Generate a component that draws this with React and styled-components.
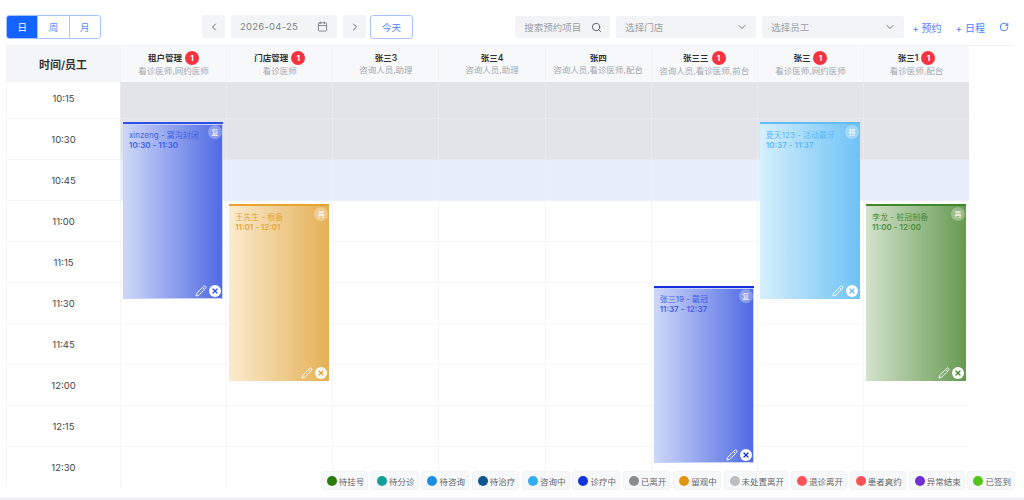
import React from "react";
import styled, { createGlobalStyle } from "styled-components";
import {
  Calendar,
  ChevronDown,
  ChevronLeft,
  ChevronRight,
  Pencil,
  RotateCw,
  Search,
  X,
} from "lucide-react";

// data
const STAFF = [
  { name: "租户管理", role: "看诊医师,网约医师", count: 1 },
  { name: "门店管理", role: "看诊医师", count: 1 },
  { name: "张三3", role: "咨询人员,助理" },
  { name: "张三4", role: "咨询人员,助理" },
  { name: "张四", role: "咨询人员,看诊医师,配台" },
  { name: "张三三", role: "咨询人员,看诊医师,前台", count: 1 },
  { name: "张三", role: "看诊医师,网约医师", count: 1 },
  { name: "张三1", role: "看诊医师,配台", count: 1 },
];

const TIMES = ["10:15", "10:30", "10:45", "11:00", "11:15", "11:30", "11:45", "12:00", "12:15", "12:30"];

const EVENTS = {
  0: { top: 44, title: "xinzeng - 窝沟封闭", time: "10:30 - 11:30", tag: "复", from: "#cfd8f8", to: "#4e69e4", line: "#2f50e6", text: "#3f5fe6", edge: "#c9d3f9" },
  1: { top: 126, title: "王先生 - 根备", time: "11:01 - 12:01", tag: "再", from: "#faebcf", to: "#e5b055", line: "#e8a32e", text: "#e6a63c" },
  5: { top: 208, title: "张三19 - 戴冠", time: "11:37 - 12:37", tag: "复", from: "#cfd8f8", to: "#4e69e4", line: "#1230e0", text: "#3f5fe6", edge: "#c9d3f9" },
  6: { top: 44, title: "夏天123 - 活动戴牙", time: "10:37 - 11:37", tag: "预", from: "#d6effc", to: "#6dc2f6", line: "#62bdf5", text: "#5cb8f2" },
  7: { top: 126, title: "李龙 - 桩冠制备", time: "11:00 - 12:00", tag: "再", from: "#d3e2cc", to: "#659a50", line: "#3f8a28", text: "#4d8c38" },
};

const LEGEND = [
  ["待挂号", "#2a7a0c"],
  ["待分诊", "#13a098"],
  ["待咨询", "#1c8fe3"],
  ["待治疗", "#0f5590"],
  ["咨询中", "#30aef2"],
  ["诊疗中", "#1232dc"],
  ["已离开", "#8c8c8c"],
  ["留观中", "#e0950e"],
  ["未处置离开", "#bdbdbd"],
  ["退诊离开", "#ff5257"],
  ["患者爽约", "#ff5257"],
  ["异常结束", "#722ed1"],
  ["已签到", "#52c41a"],
];

const SLOT_TONES = {
  closed: { bg: "#e3e4e9", line: "#e9eaee" },
  now: { bg: "#e8edfc", line: "#ecf0fc" },
  open: { bg: "#ffffff", line: "#f6f6f8" },
};

const rowTone = (index) => (index < 2 ? SLOT_TONES.closed : index === 2 ? SLOT_TONES.now : SLOT_TONES.open);

// main
const App = () => {
  return (
    <Page>
      <GlobalStyle />
      <Toolbar>
        <Segmented>
          <SegmentButton $active>日</SegmentButton>
          <SegmentButton>周</SegmentButton>
          <SegmentButton>月</SegmentButton>
        </Segmented>
        <DateGroup>
          <SquareButton>
            <ChevronLeft size={12} />
          </SquareButton>
          <DateField>
            2026-04-25
            <Calendar size={11} />
          </DateField>
          <SquareButton>
            <ChevronRight size={12} />
          </SquareButton>
          <TodayButton>今天</TodayButton>
        </DateGroup>
        <FilterGroup>
          <FilterField $width={95}>
            搜索预约项目
            <Search size={11} color="#555b66" />
          </FilterField>
          <FilterField $width={140}>
            选择门店
            <ChevronDown size={12} />
          </FilterField>
          <FilterField $width={142}>
            选择员工
            <ChevronDown size={12} />
          </FilterField>
          <TextAction $gap={2}>+ 预约</TextAction>
          <TextAction $gap={8}>+ 日程</TextAction>
          <RefreshAction>
            <RotateCw size={10} strokeWidth={2.4} />
          </RefreshAction>
        </FilterGroup>
      </Toolbar>

      <Board>
        <HeaderRow>
          <CornerCell>时间/员工</CornerCell>
          {STAFF.map((staff) => (
            <StaffCell key={staff.name}>
              <StaffName>
                {staff.name}
                {staff.count && <CountBadge>{staff.count}</CountBadge>}
              </StaffName>
              <StaffRole>{staff.role}</StaffRole>
            </StaffCell>
          ))}
        </HeaderRow>
        <BodyViewport>
          <BodyGrid>
            <TimeColumn>
              {TIMES.map((time) => (
                <TimeCell key={time}>{time}</TimeCell>
              ))}
            </TimeColumn>
            {STAFF.map((staff, col) => {
              const event = EVENTS[col];
              return (
                <StaffColumn key={staff.name}>
                  {TIMES.map((time, index) => (
                    <SlotCell key={time} $tone={rowTone(index)} />
                  ))}
                  {event && (
                    <EventCard
                      $from={event.from}
                      $to={event.to}
                      $line={event.line}
                      $edge={event.edge}
                      style={{ top: event.top }}
                    >
                      <EventText $color={event.text}>{event.title}</EventText>
                      <EventTime $color={event.text}>{event.time}</EventTime>
                      <EventTag>{event.tag}</EventTag>
                      <EventActions>
                        <Pencil size={12} color="#ffffff" strokeWidth={2} />
                        <CloseDot $color={event.line}>
                          <X size={8} strokeWidth={3.6} />
                        </CloseDot>
                      </EventActions>
                    </EventCard>
                  )}
                </StaffColumn>
              );
            })}
          </BodyGrid>
        </BodyViewport>
      </Board>

      <Legend>
        {LEGEND.map(([label, color]) => (
          <LegendChip key={label}>
            <LegendDot $color={color} />
            {label}
          </LegendChip>
        ))}
      </Legend>
      <BottomBand />
    </Page>
  );
};

// styled
const GlobalStyle = createGlobalStyle`
  html, body {
    margin: 0;
    background: #fff;
    overflow: hidden;
  }
  * {
    box-sizing: border-box;
  }
`;

const Page = styled.div`
  position: relative;
  width: 1024px;
  height: 500px;
  padding: 0 10px 0 6px;
  overflow: hidden;
  font-family: "Inter", "Noto Sans CJK SC", sans-serif;
  color: #333;
`;

const Toolbar = styled.div`
  display: flex;
  align-items: flex-start;
  height: 46px;
  padding-top: 15px;
  border-bottom: 1px solid #f1f2f4;
`;

const Segmented = styled.div`
  display: flex;
  width: 95px;
  height: 24px;
  border: 1px solid #aac4ff;
  border-radius: 3px;
  overflow: hidden;
`;

const SegmentButton = styled.div`
  flex: 1;
  display: flex;
  align-items: center;
  justify-content: center;
  font-size: 9.5px;
  color: ${(p) => (p.$active ? "#fff" : "#5b8cff")};
  background: ${(p) => (p.$active ? "#1463ff" : "#fff")};
  & + & {
    border-left: 1px solid #aac4ff;
  }
`;

const DateGroup = styled.div`
  display: flex;
  margin-left: 101px;
  gap: 6px;
`;

const SquareButton = styled.div`
  display: flex;
  align-items: center;
  justify-content: center;
  width: 23px;
  height: 23px;
  border-radius: 2px;
  background: #f3f4f6;
  color: #666c75;
`;

const DateField = styled.div`
  display: flex;
  align-items: center;
  justify-content: space-between;
  width: 106px;
  height: 23px;
  padding: 0 9px;
  border-radius: 2px;
  background: #f3f4f6;
  color: #7d828a;
  font-size: 9.5px;
  letter-spacing: 0.25px;
`;

const TodayButton = styled.div`
  display: flex;
  align-items: center;
  justify-content: center;
  width: 43px;
  height: 24px;
  margin-left: -2px;
  border: 1px solid #aac4ff;
  border-radius: 3px;
  color: #4f84ff;
  font-size: 9.5px;
`;

const FilterGroup = styled.div`
  display: flex;
  align-items: center;
  height: 22px;
  margin-top: 1px;
  margin-left: auto;
  gap: 6px;
`;

const FilterField = styled.div`
  display: flex;
  align-items: center;
  justify-content: space-between;
  width: ${(p) => p.$width}px;
  height: 22px;
  padding: 0 8px 0 9px;
  border-radius: 2px;
  background: #f3f4f6;
  color: #9a9ea6;
  font-size: 9.5px;
  & svg {
    color: #70757d;
  }
`;

const TextAction = styled.div`
  margin-left: ${(p) => p.$gap}px;
  color: #4f7dff;
  font-size: 10px;
  white-space: nowrap;
`;

const RefreshAction = styled.div`
  display: flex;
  margin: 0 5px 0 8px;
  color: #4f7dff;
`;

const Board = styled.div`
  width: 964px;
`;

const HeaderRow = styled.div`
  display: grid;
  grid-template-columns: 114px repeat(8, 106.15px);
  height: 36px;
`;

const CornerCell = styled.div`
  display: flex;
  align-items: center;
  justify-content: center;
  background: #f4f5f7;
  color: #333;
  font-size: 11px;
  font-weight: 600;
`;

const StaffCell = styled.div`
  display: flex;
  flex-direction: column;
  align-items: center;
  justify-content: center;
  background: #f7f8fa;
  border-left: 1px solid #f2f3f5;
`;

const StaffName = styled.div`
  display: flex;
  align-items: center;
  gap: 3px;
  min-height: 12px;
  color: #333;
  font-size: 8.5px;
  font-weight: 600;
  line-height: 12px;
`;

const CountBadge = styled.span`
  display: flex;
  align-items: center;
  justify-content: center;
  width: 14px;
  height: 14px;
  border-radius: 50%;
  background: #f5333f;
  color: #fff;
  font-size: 8px;
  font-weight: 700;
`;

const StaffRole = styled.div`
  color: #a3a7ae;
  font-size: 8.5px;
  line-height: 12px;
  white-space: nowrap;
`;

const BodyViewport = styled.div`
  height: 405px;
  overflow: hidden;
`;

const BodyGrid = styled.div`
  display: grid;
  grid-template-columns: 114px repeat(8, 106.15px);
  margin-top: -4px;
`;

const TimeColumn = styled.div`
  display: flex;
  flex-direction: column;
  border-left: 1px solid #f5f6f8;
`;

const TimeCell = styled.div`
  display: flex;
  align-items: center;
  justify-content: center;
  height: 41px;
  border-bottom: 1px solid #f6f6f8;
  color: #444;
  font-size: 9.5px;
`;

const StaffColumn = styled.div`
  position: relative;
  display: flex;
  flex-direction: column;
`;

const SlotCell = styled.div`
  height: 41px;
  background: ${(p) => p.$tone.bg};
  border-left: 1px solid ${(p) => p.$tone.line};
  border-bottom: 1px solid ${(p) => p.$tone.line};
`;

const EventCard = styled.div`
  position: absolute;
  left: 3px;
  width: 100px;
  height: 177px;
  padding: 6px 6px 0;
  background: linear-gradient(90deg, ${(p) => p.$from}, ${(p) => p.$to});
  border-top: 2px solid ${(p) => p.$line};
  box-shadow: ${(p) => (p.$edge ? `inset 0 0 0 1px ${p.$edge}` : "none")};
`;

const EventText = styled.div`
  color: ${(p) => p.$color};
  font-size: 8px;
  line-height: 10px;
  white-space: nowrap;
`;

const EventTime = styled(EventText)`
  font-weight: 600;
`;

const EventTag = styled.span`
  position: absolute;
  top: 1px;
  right: 1px;
  display: flex;
  align-items: center;
  justify-content: center;
  width: 14px;
  height: 14px;
  border-radius: 50%;
  background: rgba(255, 255, 255, 0.3);
  color: #fff;
  font-size: 7px;
`;

const EventActions = styled.div`
  position: absolute;
  right: 2px;
  bottom: 2px;
  display: flex;
  align-items: center;
  gap: 2px;
`;

const CloseDot = styled.span`
  display: flex;
  align-items: center;
  justify-content: center;
  width: 12px;
  height: 12px;
  border-radius: 50%;
  background: #fff;
  color: ${(p) => p.$color};
`;

const Legend = styled.div`
  position: absolute;
  right: 9px;
  top: 471px;
  display: flex;
  gap: 2.85px;
`;

const LegendChip = styled.div`
  display: flex;
  align-items: center;
  gap: 2px;
  height: 19px;
  padding: 0 3px 0 5px;
  border: 1px solid #f1f2f4;
  border-radius: 3px;
  background: #f7f8fa;
  color: #666;
  font-size: 8.5px;
  white-space: nowrap;
`;

const LegendDot = styled.span`
  width: 10px;
  height: 10px;
  border-radius: 50%;
  background: ${(p) => p.$color};
`;

const BottomBand = styled.div`
  position: absolute;
  left: 0;
  right: 0;
  bottom: 0;
  height: 3px;
  background: #f2f2f4;
`;

export default App;
